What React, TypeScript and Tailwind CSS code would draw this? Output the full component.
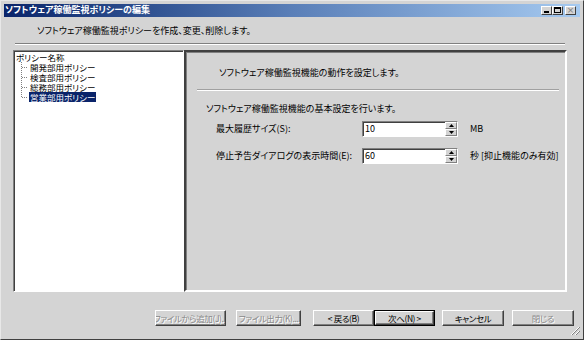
const font = "[font-family:'Noto_Sans_CJK_JP','Noto_Sans',sans-serif] [font-feature-settings:'palt']";

function WinButton({ children }: { children: React.ReactNode }) {
  return (
    <div className="w-[11px] h-[9px] bg-[#d4d4d4] border border-t-white border-l-white border-r-[#404040] border-b-[#404040] flex items-center justify-center">
      {children}
    </div>
  );
}

function Button({
  label,
  disabled,
  isDefault,
  width,
}: {
  label: string;
  disabled?: boolean;
  isDefault?: boolean;
  width: string;
}) {
  return (
    <div className={`${width} h-[16px] ${isDefault ? "border border-black" : ""}`}>
      <div className="w-full h-full bg-[#d4d4d4] border border-t-white border-l-white border-r-[#404040] border-b-[#404040] shadow-[inset_-1px_-1px_#808080] flex items-center justify-center overflow-hidden">
        <span
          className={`text-[8.5px] leading-[10px] whitespace-nowrap tracking-[-0.4px] ${
            disabled ? "text-[#8a8a8a] [text-shadow:1px_1px_0_#fff]" : "text-black"
          }`}
        >
          {label}
        </span>
      </div>
    </div>
  );
}

function SpinInput({ value }: { value: string }) {
  return (
    <div className="w-[96px] h-[16px] bg-white border border-t-[#808080] border-l-[#808080] border-b-white border-r-white shadow-[inset_1px_1px_#404040] flex">
      <div className="flex-1 pl-[2px] text-[9px] leading-[14px] text-black">{value}</div>
      <div className="w-[12px] flex flex-col">
        {[0, 1].map((i) => (
          <div
            key={i}
            className="flex-1 bg-[#d4d4d4] border border-t-white border-l-white border-r-[#808080] border-b-[#808080] flex items-center justify-center"
          >
            <svg width="5" height="3" viewBox="0 0 5 3">
              {i === 0 ? (
                <polygon points="2.5,0 5,3 0,3" fill="#000" />
              ) : (
                <polygon points="0,0 5,0 2.5,3" fill="#000" />
              )}
            </svg>
          </div>
        ))}
      </div>
    </div>
  );
}

function TreeRow({ label, last, selected }: { label: string; last?: boolean; selected?: boolean }) {
  return (
    <div className="flex items-stretch h-[10px] overflow-hidden">
      <svg width="13" height="10" viewBox="0 0 13 10" className="shrink-0">
        <line x1="5.5" y1="0" x2="5.5" y2={last ? 5 : 10} stroke="#808080" strokeDasharray="1 1" />
        <line x1="6" y1="5.5" x2="12" y2="5.5" stroke="#808080" strokeDasharray="1 1" />
      </svg>
      <span
        className={`text-[8.5px] leading-[10px] px-[1px] ${
          selected ? "bg-[#0a246a] text-white" : "text-black"
        }`}
      >
        {label}
      </span>
    </div>
  );
}

export default function App() {
  return (
    <div className={`w-[585px] h-[341px] bg-white ${font}`}>
      <div className="w-[584px] h-[340px] bg-[#d4d4d4] border border-t-[#e8e8e8] border-l-[#e8e8e8] border-r-[#404040] border-b-[#404040] p-[3px] flex flex-col">
        {/* title bar */}
        <div className="h-[13px] bg-gradient-to-r from-[#0a246a] via-[#5a7fb8] to-[#a6caf0] flex items-center justify-between pl-[1px] pr-[4px]">
          <span className="text-white font-bold text-[9px] leading-[12px]">ソフトウェア稼働監視ポリシーの編集</span>
          <div className="flex items-center">
            <WinButton>
              <div className="w-[5px] h-[2px] bg-black mt-[4px]" />
            </WinButton>
            <WinButton>
              <div className="w-[7px] h-[6px] border border-black border-t-2" />
            </WinButton>
            <div className="w-[2px]" />
            <WinButton>
              <span className="text-[#808080] text-[9px] leading-[8px] [font-family:'DejaVu_Sans',sans-serif]">×</span>
            </WinButton>
          </div>
        </div>

        {/* subtitle */}
        <div className="mt-[8px] pl-[33px] h-[12px] text-[9px] leading-[12px] text-black">
          ソフトウェア稼働監視ポリシーを作成、変更、削除します。
        </div>

        {/* separator */}
        <div className="mt-[6px] ml-[11px] mr-[15px] h-[2px] border-t border-t-[#808080] border-b border-b-white" />

        {/* panels */}
        <div className="mt-[5px] ml-[9px] flex h-[248px]">
          <div className="w-[171px] h-full bg-white border border-t-[#808080] border-l-[#808080] border-r-white border-b-white shadow-[inset_1px_1px_#404040] pt-[1px] pl-[1px]">
            <div className="text-[8.5px] leading-[10px] h-[10px] text-black pl-[1px]">ポリシー名称</div>
            <div className="pl-[1px]">
              <TreeRow label="開発部用ポリシー" />
              <TreeRow label="検査部用ポリシー" />
              <TreeRow label="総務部用ポリシー" />
              <TreeRow label="営業部用ポリシー" last selected />
            </div>
          </div>

          <div className="w-[383px] h-full border-2 border-t-[#404040] border-l-[#404040] border-r-white border-b-white shadow-[inset_1px_1px_#808080]">
            <div className="pl-[33px] pt-[15px] text-[9px] leading-[12px] text-black">
              ソフトウェア稼働監視機能の動作を設定します。
            </div>
            <div className="mt-[10px] ml-[11px] mr-[6px] h-[2px] border-t border-t-[#a0a0a0] border-b border-b-white" />
            <div className="pl-[20px] mt-[12px] text-[9px] leading-[12px] text-black">
              ソフトウェア稼働監視機能の基本設定を行います。
            </div>
            <div className="mt-[6px] pl-[30px] grid grid-cols-[146px_96px_auto] gap-y-[11px] items-center text-[9px] leading-[12px] text-black">
              <span>最大履歴サイズ(S):</span>
              <SpinInput value="10" />
              <span className="pl-[12px]">MB</span>
              <span>停止予告ダイアログの表示時間(E):</span>
              <SpinInput value="60" />
              <span className="pl-[12px]">秒 [抑止機能のみ有効]</span>
            </div>
          </div>
        </div>

        {/* buttons */}
        <div className="mt-[18px] flex items-center pl-[151px]">
          <Button label="ファイルから追加(J)..." disabled width="w-[71px]" />
          <div className="w-[10px]" />
          <Button label="ファイル出力(K)..." disabled width="w-[65px]" />
          <div className="w-[12px]" />
          <Button label="< 戻る(B)" width="w-[61px]" />
          <Button label="次へ(N) >" isDefault width="w-[61px]" />
          <div className="w-[7px]" />
          <Button label="キャンセル" width="w-[62px]" />
          <div className="w-[8px]" />
          <Button label="閉じる" disabled width="w-[62px]" />
        </div>

        <div className="flex-1 flex justify-end items-end">
          <svg width="10" height="10" viewBox="0 0 10 10">
            <line x1="9" y1="1" x2="1" y2="9" stroke="#fff" />
            <line x1="10" y1="1" x2="2" y2="9" stroke="#808080" />
            <line x1="9" y1="5" x2="5" y2="9" stroke="#fff" />
            <line x1="10" y1="5" x2="6" y2="9" stroke="#808080" />
          </svg>
        </div>
      </div>
    </div>
  );
}
